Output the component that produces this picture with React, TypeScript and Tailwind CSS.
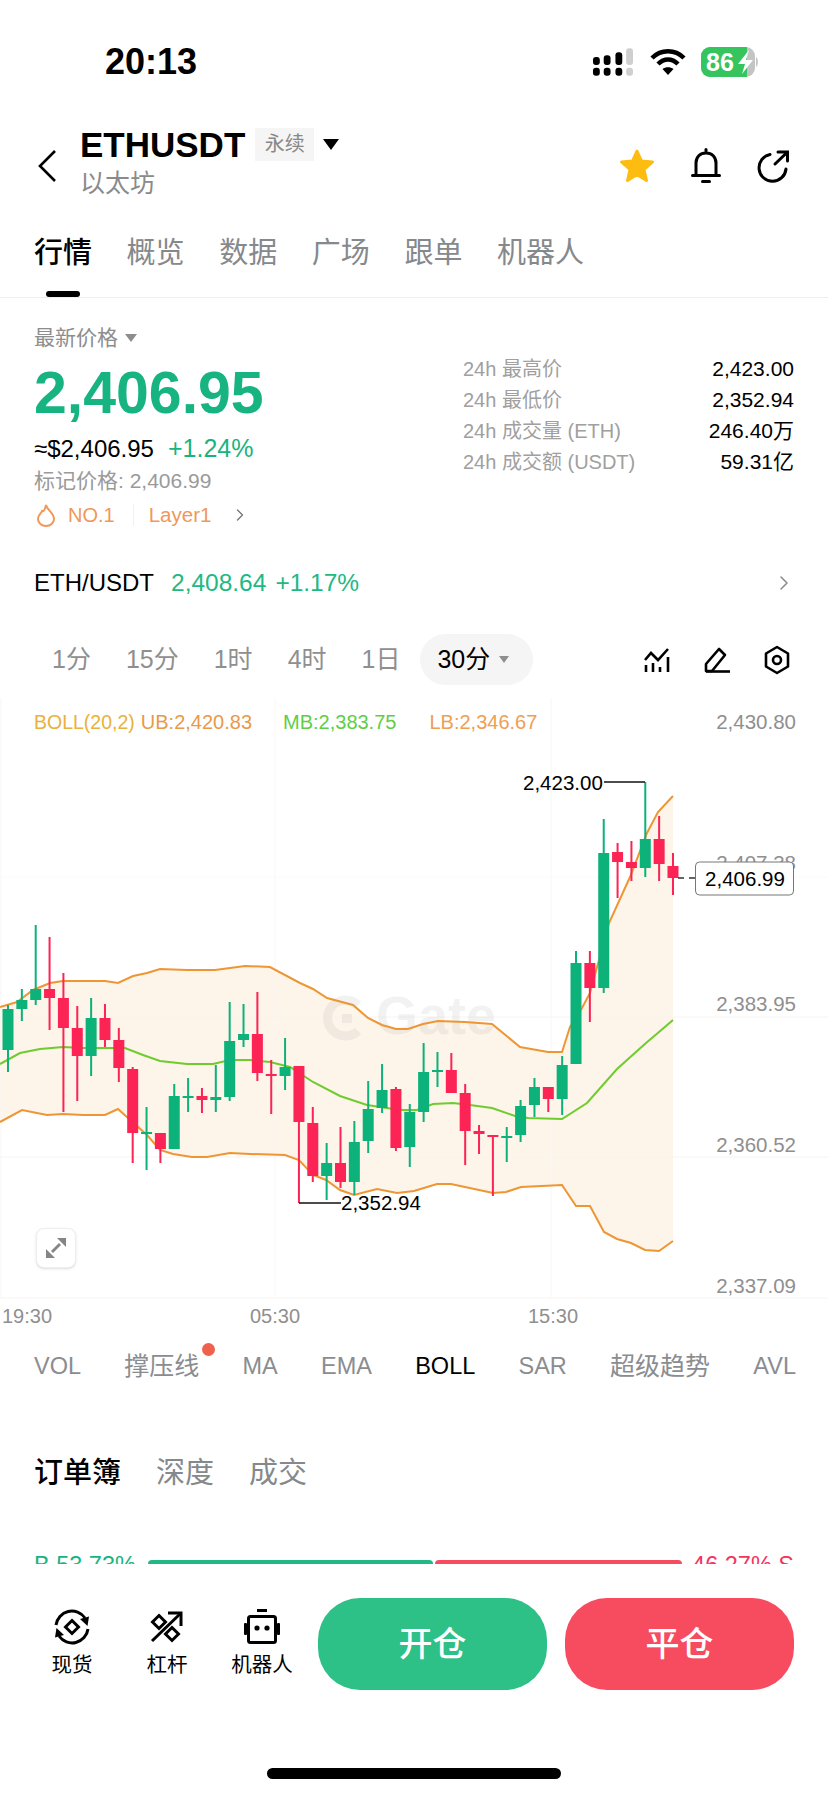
import { ChevronRight } from "lucide-react";

const pageTabs = ["行情", "概览", "数据", "广场", "跟单", "机器人"];
const stats = [
  ["24h 最高价", "2,423.00"],
  ["24h 最低价", "2,352.94"],
  ["24h 成交量 (ETH)", "246.40万"],
  ["24h 成交额 (USDT)", "59.31亿"],
];
const intervals = ["1分", "15分", "1时", "4时", "1日"];
const indicators = ["VOL", "撑压线", "MA", "EMA", "BOLL", "SAR", "超级趋势", "AVL"];

// color, wick top, body top, body bottom, wick bottom (page px)
const candles: [string, number, number, number, number][] = [
  ["g", 1005, 1009, 1050, 1072],
  ["g", 989, 1000, 1009, 1021],
  ["g", 925, 989, 1000, 1005],
  ["r", 937, 989, 998, 1030],
  ["r", 973, 998, 1028, 1112],
  ["r", 1006, 1028, 1056, 1101],
  ["g", 998, 1018, 1056, 1076],
  ["r", 1004, 1018, 1040, 1047],
  ["r", 1028, 1040, 1068, 1082],
  ["r", 1067, 1069, 1133, 1163],
  ["g", 1107, 1132, 1134, 1170],
  ["r", 1133, 1133, 1149, 1163],
  ["g", 1084, 1096, 1149, 1149],
  ["g", 1078, 1096, 1098, 1112],
  ["r", 1088, 1096, 1100, 1113],
  ["g", 1065, 1097, 1100, 1112],
  ["g", 1002, 1041, 1097, 1101],
  ["g", 1004, 1034, 1040, 1047],
  ["r", 992, 1034, 1073, 1081],
  ["r", 1060, 1074, 1076, 1114],
  ["g", 1038, 1067, 1076, 1090],
  ["r", 1066, 1066, 1122, 1203],
  ["r", 1107, 1123, 1176, 1182],
  ["g", 1143, 1163, 1176, 1200],
  ["r", 1127, 1163, 1182, 1188],
  ["g", 1121, 1142, 1182, 1195],
  ["g", 1081, 1109, 1141, 1153],
  ["g", 1064, 1090, 1108, 1113],
  ["r", 1087, 1089, 1148, 1151],
  ["g", 1104, 1112, 1147, 1167],
  ["g", 1043, 1072, 1112, 1122],
  ["g", 1052, 1070, 1072, 1087],
  ["r", 1053, 1070, 1093, 1093],
  ["r", 1084, 1093, 1131, 1165],
  ["r", 1125, 1131, 1134, 1154],
  ["r", 1135, 1135, 1137, 1196],
  ["g", 1127, 1136, 1138, 1162],
  ["g", 1100, 1106, 1135, 1142],
  ["g", 1078, 1087, 1105, 1117],
  ["r", 1087, 1087, 1099, 1112],
  ["g", 1056, 1065, 1099, 1115],
  ["g", 951, 963, 1064, 1064],
  ["r", 951, 963, 988, 1022],
  ["g", 819, 853, 988, 993],
  ["r", 843, 852, 862, 898],
  ["r", 841, 862, 868, 881],
  ["g", 782, 839, 868, 877],
  ["r", 816, 839, 864, 881],
  ["r", 853, 866, 878, 895],
];

const upper =
  "0,1007 17,1002 33,990 50,983 63,981 83,981 105,981 118,983 133,976 147,973 160,969 187,970 215,970 230,968 245,966 270,967 300,983 313,989 327,998 353,1005 368,1018 382,1025 396,1029 408,1029 423,1024 438,1021 465,1022 492,1024 520,1047 548,1052 562,1052 570,1027 582,1008 590,993 609,923 630,877 647,833 658,812 673,796";
const lower =
  "0,1122 22,1110 47,1115 63,1114 83,1115 105,1115 118,1109 128,1118 147,1135 160,1150 173,1154 192,1157 207,1157 230,1153 250,1154 285,1155 299,1160 313,1175 326,1180 340,1190 354,1195 377,1189 397,1193 414,1191 437,1184 451,1184 493,1193 506,1192 521,1187 562,1185 576,1206 590,1206 604,1232 617,1239 631,1243 645,1250 659,1251 673,1241";
const middle =
  "0,1064 20,1053 40,1049 63,1047 83,1048 107,1048 125,1048 143,1055 160,1061 187,1064 213,1064 230,1060 250,1060 270,1062 290,1067 313,1082 340,1096 367,1105 400,1110 417,1110 433,1104 453,1103 470,1105 492,1108 515,1116 528,1118 562,1119 587,1103 617,1069 646,1043 659,1032 673,1020";
const bandFill = upper + " " + lower.split(" ").reverse().join(" ");

const StatusIcons = () => (
  <div className="flex items-center gap-[15px]">
    <svg width="41" height="30" viewBox="0 0 42 30" className="mr-[2px]">
      <rect x="1" y="21" width="7" height="8" rx="3" />
      <rect x="1" y="10" width="7" height="8" rx="3" />
      <rect x="12" y="21" width="7" height="8" rx="3" />
      <rect x="12" y="8" width="7" height="10" rx="3" />
      <rect x="24" y="21" width="7" height="8" rx="3" />
      <rect x="24" y="5" width="7" height="13" rx="3" />
      <rect x="35" y="21" width="7" height="8" rx="3" fill="#cfcfcf" />
      <rect x="35" y="1" width="7" height="17" rx="3" fill="#cfcfcf" />
    </svg>
    <svg width="36" height="28" viewBox="0 0 36 28" fill="none" stroke="#000" strokeWidth="4.5">
      <path d="M2 10 C11 1 25 1 34 10" />
      <path d="M8 16 C14 10 22 10 28 16" />
      <path d="M18 27 L12.5 21 C15.5 18.5 20.5 18.5 23.5 21 Z" fill="#000" stroke="none" />
    </svg>
    <svg width="58" height="30" viewBox="0 0 58 30">
      <rect x="0" y="0" width="54" height="30" rx="9" fill="#c2c4c6" />
      <path d="M9 0 H46 V30 H9 A9 9 0 0 1 0 21 V9 A9 9 0 0 1 9 0 Z" fill="#36c45e" />
      <path d="M55 10 C57.5 11 57.5 19 55 20 Z" fill="#c2c4c6" />
      <text x="5" y="24" fill="#fff" className="text-[25px] font-bold">
        86
      </text>
      <path d="M48 3 L37 17 H44 L41 27 L52 13 H45 Z" fill="#fff" />
    </svg>
  </div>
);

const Chart = () => (
  <div className="relative h-[602px]">
    <svg viewBox="0 698 828 602" className="block h-full w-full text-[20.5px]">
      <polygon points={bandFill} fill="#fdf4ea" />
      {[877, 1017, 1157, 1298].map((y) => (
        <line key={y} x1="0" x2="828" y1={y} y2={y} stroke={y === 877 ? "#fafafa" : "#f6f4f1"} strokeWidth="1" />
      ))}
      {[1, 275, 551].map((x) => (
        <line key={x} x1={x} x2={x} y1="698" y2="1298" stroke="#f8f7f5" strokeWidth="1" />
      ))}
      {/* watermark */}
      <g opacity="0.05">
        <path d="M358 1031 A18 18 0 1 1 358 1005" fill="none" stroke="#222" strokeWidth="9" />
        <rect x="342" y="1014" width="10" height="9" fill="#222" />
        <text x="376" y="1034" fill="#222" className="text-[54px] font-bold">
          Gate
        </text>
      </g>
      <polyline points={upper} fill="none" stroke="#ee9633" strokeWidth="2" />
      <polyline points={lower} fill="none" stroke="#ee9633" strokeWidth="2" />
      <polyline points={middle} fill="none" stroke="#6fcc2e" strokeWidth="2" />
      {candles.map(([c, wickTop, top, bottom, wickBottom], i) => {
        const x = 8 + i * 13.854;
        const color = c === "g" ? "#0db27a" : "#fb2455";
        return (
          <g key={i} fill={color}>
            <rect x={x - 1} y={wickTop} width="2" height={wickBottom - wickTop} />
            <rect x={x - 5.5} y={top} width="11" height={bottom - top} />
          </g>
        );
      })}
      <text x="796" y="729" textAnchor="end" className="fill-[#8f8f8f]">2,430.80</text>
      <text x="796" y="870" textAnchor="end" className="fill-[#8f8f8f]">2,407.38</text>
      <text x="796" y="1011" textAnchor="end" className="fill-[#8f8f8f]">2,383.95</text>
      <text x="796" y="1152" textAnchor="end" className="fill-[#8f8f8f]">2,360.52</text>
      <text x="796" y="1293" textAnchor="end" className="fill-[#8f8f8f]">2,337.09</text>

      <path d="M604 782 H645" stroke="#111" strokeWidth="1.5" />
      <text x="523" y="790" className="fill-black">2,423.00</text>
      <path d="M299 1203 H341" stroke="#111" strokeWidth="1.5" />
      <text x="341" y="1210" className="fill-black">2,352.94</text>

      <path d="M678 878 H696" stroke="#333" strokeWidth="1.5" strokeDasharray="6 5" />
      <rect x="695.5" y="862" width="98" height="33" rx="4" fill="#fff" stroke="#777" strokeWidth="1" />
      <text x="745" y="886" textAnchor="middle" className="fill-black">2,406.99</text>
    </svg>

    {/* BOLL legend */}
    <div className="absolute left-[34px] top-[12px] flex h-[24px] items-center text-[20px] leading-[24px] whitespace-nowrap">
      <span className="text-[19.5px] text-[#e8b23c]">BOLL(20,2)</span>
      <span className="ml-[6px] text-[#e89a4a]">UB:2,420.83</span>
      <span className="ml-[31px] text-[#5fce46]">MB:2,383.75</span>
      <span className="ml-[33px] text-[#ee9e55]">LB:2,346.67</span>
    </div>

    <div className="absolute left-[36px] top-[530px] flex h-[40px] w-[40px] items-center justify-center rounded-lg border border-[#eeeeee] bg-white shadow-sm">
      <svg width="20" height="20" viewBox="0 0 20 20" fill="#858585">
        <path d="M11 0 H20 V9 Z" />
        <path d="M0 11 V20 H9 Z" />
        <path d="M5 13 L13 5 L15 7 L7 15 Z" />
      </svg>
    </div>
  </div>
);

const App = () => {
  return (
    <div className="flex h-[1796px] w-[828px] flex-col overflow-hidden bg-white font-['Liberation_Sans','Noto_Sans_CJK_SC',sans-serif] text-black">
      {/* Status bar */}
      <div className="flex h-[124px] items-center justify-between pl-[105px] pr-[69px]">
        <span className="text-[36px] font-bold leading-none">20:13</span>
        <StatusIcons />
      </div>

      {/* Header */}
      <div className="flex h-[96px] items-start pl-[37px] pr-[38px] pt-[2px]">
        <svg width="20" height="32" viewBox="0 0 20 32" fill="none" stroke="#000" strokeWidth="2.6" className="mt-[24px] mr-[23px]">
          <path d="M18 1 L3 16 L18 31" />
        </svg>
        <div className="flex flex-col">
          <div className="flex h-[36px] items-center">
            <span className="text-[35px] font-bold leading-none">ETHUSDT</span>
            <span className="ml-[10px] flex h-[33px] w-[59px] items-center justify-center bg-[#f5f5f5] text-[20px] text-[#888888]">
              永续
            </span>
            <span className="ml-[9px] h-0 w-0 border-x-[8px] border-t-[11px] border-x-transparent border-t-black" />
          </div>
          <span className="mt-[6px] h-[30px] text-[25px] leading-[30px] text-[#8a8a8a]">以太坊</span>
        </div>
        <div className="ml-auto mt-[22px] flex items-center gap-[36px]">
          <svg width="36" height="36" viewBox="0 0 36 36" fill="#fdbc10" stroke="#fdbc10" strokeWidth="3" strokeLinejoin="round">
            <path d="M18 3 L22.5 13 L33.5 14 L25 21.5 L27.5 32.5 L18 26.5 L8.5 32.5 L11 21.5 L2.5 14 L13.5 13 Z" />
          </svg>
          <svg width="30" height="36" viewBox="0 0 30 36" fill="none" stroke="#000" strokeWidth="3" strokeLinecap="round">
            <path d="M5 27 V15 C5 9 9 5 15 5 C21 5 25 9 25 15 V27" />
            <path d="M1.5 27.5 H28.5" />
            <path d="M15 1.5 V3" />
            <path d="M11.5 33.5 H18.5" />
          </svg>
          <svg width="33" height="34" viewBox="0 0 33 34" fill="none" stroke="#000" strokeWidth="3" strokeLinecap="round">
            <path d="M13 5.5 A13.5 13.5 0 1 0 29 20" />
            <path d="M18 15 L30 3.5" />
            <path d="M21 3 H30.5 V12" />
          </svg>
        </div>
      </div>

      {/* Page tabs */}
      <div className="flex h-[78px] gap-[34.6px] border-b border-[#eeeeee] pl-[34px]">
        {pageTabs.map((tab, index) => (
          <div key={tab} className="flex flex-col items-center">
            <span
              className={
                index === 0
                  ? "mt-[16px] text-[29px] font-medium leading-[34px] text-black"
                  : "mt-[16px] text-[29px] leading-[34px] text-[#85898c]"
              }
            >
              {tab}
            </span>
            {index === 0 && <span className="mt-[21px] h-[6px] w-[34px] rounded-[3px] bg-black" />}
          </div>
        ))}
      </div>

      {/* Price info */}
      <div className="flex h-[255px] justify-between pl-[34px] pr-[34px]">
        <div className="flex flex-col">
          <div className="mt-[25px] flex h-[30px] items-center text-[21px] text-[#8d8d8d]">
            最新价格
            <span className="ml-[7px] h-0 w-0 border-x-[6px] border-t-[8px] border-x-transparent border-t-[#8d8d8d]" />
          </div>
          <div className="mt-[7px] h-[66px] text-[59px] font-bold leading-[66px] text-[#17b481]">2,406.95</div>
          <div className="mt-[8px] flex h-[30px] items-center text-[24px]">
            <span>≈$2,406.95</span>
            <span className="ml-[14px] text-[25px] text-[#17b481]">+1.24%</span>
          </div>
          <div className="mt-[3px] h-[28px] text-[21px] leading-[28px] text-[#9a9a9a]">标记价格: 2,406.99</div>
          <div className="mt-[5px] flex h-[30px] items-center text-[20px] text-[#f0985a]">
            <svg width="20" height="24" viewBox="0 0 20 24" fill="none" stroke="#f0985a" strokeWidth="2" className="ml-[2px]">
              <path d="M10 2 C11 7 18 10 18 16 A8 7 0 0 1 2 16 C2 12 5 11 6 8 C8 9 9 6 10 2 Z" />
            </svg>
            <span className="ml-[12px]">NO.1</span>
            <span className="ml-[18px] h-[22px] w-px bg-[#f2f2f2]" />
            <span className="ml-[15px] text-[20.5px]">Layer1</span>
            <ChevronRight size={20} strokeWidth={1.6} className="ml-[22px] -translate-x-[3px] text-[#777777]" />
          </div>
        </div>
        <div className="flex w-[331px] flex-col pt-[55px]">
          {stats.map(([label, value]) => (
            <div key={label} className="flex h-[31px] items-center justify-between text-[20px]">
              <span className="text-[#a0a0a0]">{label}</span>
              <span className="text-[21px]">{value}</span>
            </div>
          ))}
        </div>
      </div>

      {/* Spot row */}
      <div className="flex h-[60px] items-center pl-[34px] pr-[34px] text-[24px]">
        <span className="font-medium">ETH/USDT</span>
        <span className="ml-[17px] text-[24.5px] text-[#22b884]">2,408.64</span>
        <span className="ml-[9px] text-[24.5px] text-[#22b884]">+1.17%</span>
        <ChevronRight size={24} strokeWidth={1.5} className="ml-auto -mr-[2px] text-[#8a8a8a]" />
      </div>

      {/* Intervals */}
      <div className="mt-[21px] flex h-[51px] items-center pl-[52px] pr-[38px] text-[25px] text-[#8f8f8f]">
        <div className="flex items-center gap-[35px]">
          {intervals.map((item) => (
            <span key={item}>{item}</span>
          ))}
          <div className="-ml-[15px] flex h-[51px] w-[113px] items-center rounded-full bg-[#f5f5f5] pl-[17px]">
            <span className="text-black">30分</span>
            <span className="ml-[9px] h-0 w-0 border-x-[5px] border-t-[7px] border-x-transparent border-t-[#8f8f8f]" />
          </div>
        </div>
        <div className="ml-auto flex items-center gap-[34px]">
          <svg width="26" height="24" viewBox="0 0 26 24" fill="none" stroke="#000" strokeWidth="2.6">
            <path d="M1 12 L7 5 L14 12 L24 1" />
            <path d="M2 17 V24 M9 15 V24 M16 19 V24 M24 9 V24" />
          </svg>
          <svg width="26" height="26" viewBox="0 0 26 26" fill="none" stroke="#000" strokeWidth="2.6" strokeLinejoin="round">
            <path d="M2 24 V17 L15 2 L21 8 L8 24 Z" />
            <path d="M2 24.5 H26" />
          </svg>
          <svg width="26" height="30" viewBox="0 0 26 30" fill="none" stroke="#000" strokeWidth="2.6" strokeLinejoin="round">
            <path d="M13 2 L24 8.5 V21.5 L13 28 L2 21.5 V8.5 Z" />
            <circle cx="13" cy="15" r="4" />
          </svg>
        </div>
      </div>

      <div className="mt-[13px]">
        <Chart />
      </div>

      {/* Time axis */}
      <div className="flex h-[32px] items-center pl-[2px] text-[20px] text-[#8f8f8f]">
        <span className="w-[248px]">19:30</span>
        <span className="w-[278px]">05:30</span>
        <span>15:30</span>
      </div>

      {/* Indicators */}
      <div className="mt-[15px] flex h-[40px] items-center justify-between pl-[34px] pr-[32px] text-[23.5px] text-[#8a8d90]">
        {indicators.map((name) => (
          <span
            key={name}
            className={
              name === "BOLL"
                ? "relative text-black"
                : name === "撑压线" || name === "超级趋势"
                  ? "relative text-[25px]"
                  : "relative"
            }
          >
            {name}
            {name === "撑压线" && (
              <span className="absolute -right-[16px] -top-[5px] h-[13px] w-[13px] rounded-full bg-[#f0604c]" />
            )}
          </span>
        ))}
      </div>

      {/* Order book tabs */}
      <div className="mt-[67px] flex h-[40px] items-center gap-[35px] pl-[34px] text-[29px] text-[#85898c]">
        <span className="font-medium text-black">订单簿</span>
        <span>深度</span>
        <span>成交</span>
      </div>

      {/* Ratio row, cut off by the bottom bar */}
      <div className="mt-[59px] flex h-[11px] overflow-hidden pl-[34px] pr-[34px] text-[23.5px] leading-[24px]">
        <span className="text-[#17b481]">B 53.73%</span>
        <div className="ml-[12px] mr-[10px] mt-[7px] flex h-[8px] flex-1 gap-[2px]">
          <div className="w-[285px] rounded-t bg-[#22b884]" />
          <div className="flex-1 rounded-t bg-[#f74b60]" />
        </div>
        <span className="text-[#f5345c]">46.27% S</span>
      </div>

      {/* Bottom bar */}
      <div className="mt-[34px] flex items-start pl-[32px] pr-[34px]">
        <div className="flex gap-[15px] text-[20.5px]">
          <div className="flex w-[80px] flex-col items-center pt-[11px]">
            <svg width="36" height="36" viewBox="0 0 36 36" fill="none" stroke="#000" strokeWidth="3">
              <path d="M2 16 A16 16 0 0 1 31 9" />
              <path d="M34 20 A16 16 0 0 1 5 27" />
              <path d="M26 10 L35 7.5 L33.5 17 Z" fill="#000" stroke="none" />
              <path d="M10 26 L1 28.5 L2.5 19 Z" fill="#000" stroke="none" />
              <path d="M18 11.5 L24.5 18 L18 24.5 L11.5 18 Z" />
            </svg>
            <span className="mt-[7px] h-[26px] leading-[26px]">现货</span>
          </div>
          <div className="flex w-[80px] flex-col items-center pt-[11px]">
            <svg width="36" height="36" viewBox="-2 -2 36 36" fill="none" stroke="#000" strokeWidth="3">
              <path d="M1 30 L30 2" />
              <path d="M17 2 H30 V15" />
              <path d="M8 4.5 L14.5 11 L8 17.5 L1.5 11 Z" />
              <path d="M21 16.5 L27.5 23 L21 29.5 L14.5 23 Z" />
            </svg>
            <span className="mt-[7px] h-[26px] leading-[26px]">杠杆</span>
          </div>
          <div className="flex w-[80px] flex-col items-center pt-[11px]">
            <svg width="36" height="36" viewBox="0 0 36 36">
              <rect x="13" y="0" width="10" height="3" />
              <rect x="4.5" y="7.5" width="27" height="26" rx="2" fill="none" stroke="#000" strokeWidth="3" />
              <rect x="0" y="14" width="3" height="12" rx="1" />
              <rect x="33" y="14" width="3" height="12" rx="1" />
              <circle cx="13" cy="19" r="2.6" />
              <circle cx="23" cy="19" r="2.6" />
            </svg>
            <span className="mt-[7px] h-[26px] leading-[26px]">机器人</span>
          </div>
        </div>
        <div className="ml-[16px] flex h-[92px] w-[229px] items-center justify-center rounded-[42px] bg-[#2dc087] text-[34px] font-medium text-white">
          开仓
        </div>
        <div className="ml-[18px] flex h-[92px] w-[229px] items-center justify-center rounded-[42px] bg-[#f74b60] text-[34px] font-medium text-white">
          平仓
        </div>
      </div>

      <div className="mx-auto mt-[78px] h-[11px] w-[294px] shrink-0 rounded-full bg-black" />
    </div>
  );
};

export default App;
